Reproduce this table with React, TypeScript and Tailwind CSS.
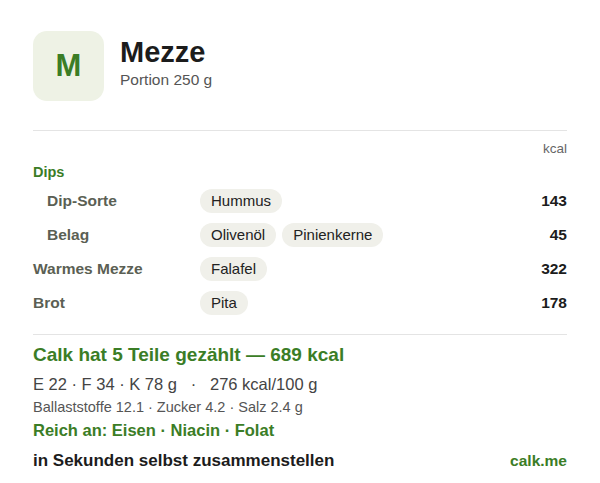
const FONT = { fontFamily: '"Liberation Sans", Arial, sans-serif' };

type Row = { label: string; sub?: boolean; chips: string[]; kcal: number };

const ROWS: Row[] = [
  { label: 'Dip-Sorte', sub: true, chips: ['Hummus'], kcal: 143 },
  { label: 'Belag', sub: true, chips: ['Olivenöl', 'Pinienkerne'], kcal: 45 },
  { label: 'Warmes Mezze', chips: ['Falafel'], kcal: 322 },
  { label: 'Brot', chips: ['Pita'], kcal: 178 },
];

export default function App() {
  return (
    <div className="w-[600px] h-[483px] bg-white px-[33px] pt-[31px] text-[#1a1a1a]" style={FONT}>
      <div className="flex items-start gap-4">
        <div className="flex h-[70px] w-[71px] items-center justify-center rounded-[14px] bg-[#eef2e5] text-[31px] font-bold text-[#3b7d26]">
          M
        </div>
        <div className="pt-[5px]">
          <div className="text-[29px] font-bold leading-[32px] text-[#1c1c1c]">Mezze</div>
          <div className="mt-[3px] text-[15.5px] leading-[18px] text-[#555]">Portion 250 g</div>
        </div>
      </div>

      <div className="mt-[29px] h-px bg-[#e4e4e4]" />

      <div className="mt-[10px] text-right text-[13.5px] leading-[16px] text-[#666]">kcal</div>
      <div className="mt-[6px] text-[14.5px] font-bold leading-[18px] text-[#3b7d26]">Dips</div>

      <div className="mt-[8px] flex flex-col gap-[10px]">
        {ROWS.map((r) => (
          <div key={r.label} className="flex h-[24px] items-center">
            <div
              className={`w-[167px] text-[15.5px] font-bold text-[#5b5f54] ${r.sub ? 'pl-[14px]' : ''}`}
            >
              {r.label}
            </div>
            <div className="flex flex-1 gap-[6px]">
              {r.chips.map((c) => (
                <span
                  key={c}
                  className="rounded-full bg-[#f0f0ea] px-[11px] py-[3px] text-[15px] leading-[18px] text-[#222]"
                >
                  {c}
                </span>
              ))}
            </div>
            <div className="text-[15.5px] font-bold text-[#1c1c1c]">{r.kcal}</div>
          </div>
        ))}
      </div>

      <div className="mt-[19px] h-px bg-[#e4e4e4]" />

      <div className="mt-[9px] text-[19px] font-bold leading-[22px] text-[#3b7d26]">
        Calk hat 5 Teile gezählt — 689 kcal
      </div>
      <div className="mt-[8px] text-[16.5px] leading-[20px] text-[#444] whitespace-pre">
        {'E 22 · F 34 · K 78 g   ·   276 kcal/100 g'}
      </div>
      <div className="mt-[5px] text-[14.5px] leading-[16px] text-[#555]">
        Ballaststoffe 12.1 · Zucker 4.2 · Salz 2.4 g
      </div>
      <div className="mt-[5px] text-[16.5px] font-bold leading-[20px] text-[#3b7d26]">
        Reich an: Eisen · Niacin · Folat
      </div>
      <div className="mt-[11px] flex items-center justify-between">
        <span className="text-[17px] font-bold leading-[20px] text-[#1c1c1c]">
          in Sekunden selbst zusammenstellen
        </span>
        <span className="text-[15.5px] font-bold leading-[20px] text-[#3b7d26]">calk.me</span>
      </div>
    </div>
  );
}
